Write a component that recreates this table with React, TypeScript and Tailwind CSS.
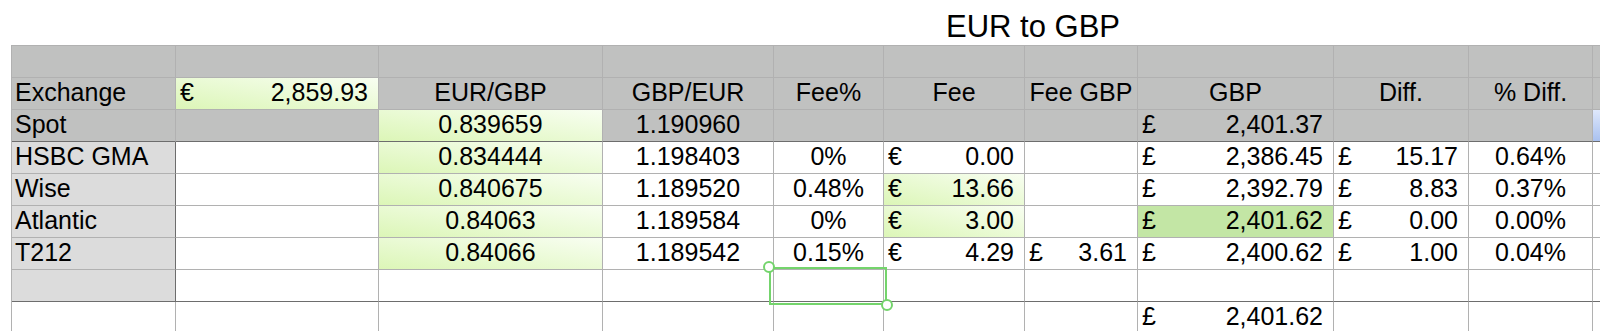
import React from "react";

type Bg = "h" | "l" | "w" | "g" | "G" | "b";
type CellSpec = {
  t?: string;
  sym?: string;
  k?: "l" | "c" | "cur";
  bg: Bg;
};

const bgClass: Record<Bg, string> = {
  h: "bg-[#c0c1c0]",
  l: "bg-[#dcdcdc]",
  w: "bg-white",
  g: "bg-linear-to-bl from-[#f8fef1] to-[#dcf6b7]",
  G: "bg-[#c3e6a5]",
  b: "bg-linear-to-b from-[#dfe8fb] to-[#a9c1ef]",
};

const H = (t?: string, k: "l" | "c" | "cur" = "c"): CellSpec => ({ t, k, bg: "h" });

const header1: CellSpec[] = Array.from({ length: 11 }, () => H());
const header2: CellSpec[] = [
  H("Exchange", "l"),
  { sym: "€", t: "2,859.93", k: "cur", bg: "g" },
  H("EUR/GBP"),
  H("GBP/EUR"),
  H("Fee%"),
  H("Fee"),
  H("Fee GBP"),
  H("GBP"),
  H("Diff."),
  H("% Diff."),
  H(),
];
const spot: CellSpec[] = [
  H("Spot", "l"),
  H(),
  { t: "0.839659", k: "c", bg: "g" },
  H("1.190960"),
  H(),
  H(),
  H(),
  { sym: "£", t: "2,401.37", k: "cur", bg: "h" },
  H(),
  H(),
  { bg: "b" },
];

function body(
  label: string,
  rate: string,
  inv: string,
  feePct: string,
  fee: string,
  feeG: boolean,
  feeGbp: string | undefined,
  gbp: string,
  gbpG: boolean,
  diff: string,
  pdiff: string
): CellSpec[] {
  return [
    { t: label, k: "l", bg: "l" },
    { bg: "w" },
    { t: rate, k: "c", bg: "g" },
    { t: inv, k: "c", bg: "w" },
    { t: feePct, k: "c", bg: "w" },
    { sym: "€", t: fee, k: "cur", bg: feeG ? "g" : "w" },
    feeGbp ? { sym: "£", t: feeGbp, k: "cur", bg: "w" } : { bg: "w" },
    { sym: "£", t: gbp, k: "cur", bg: gbpG ? "G" : "w" },
    { sym: "£", t: diff, k: "cur", bg: "w" },
    { t: pdiff, k: "c", bg: "w" },
    { bg: "w" },
  ];
}

const rows: CellSpec[][] = [
  header1,
  header2,
  spot,
  body("HSBC GMA", "0.834444", "1.198403", "0%", "0.00", false, undefined, "2,386.45", false, "15.17", "0.64%"),
  body("Wise", "0.840675", "1.189520", "0.48%", "13.66", true, undefined, "2,392.79", false, "8.83", "0.37%"),
  body("Atlantic", "0.84063", "1.189584", "0%", "3.00", true, undefined, "2,401.62", true, "0.00", "0.00%"),
  body("T212", "0.84066", "1.189542", "0.15%", "4.29", false, "3.61", "2,400.62", false, "1.00", "0.04%"),
  [{ bg: "l" }, ...Array.from({ length: 10 }, () => ({ bg: "w" as Bg }))],
  [
    { bg: "w" },
    { bg: "w" },
    { bg: "w" },
    { bg: "w" },
    { bg: "w" },
    { bg: "w" },
    { bg: "w" },
    { sym: "£", t: "2,401.62", k: "cur", bg: "w" },
    { bg: "w" },
    { bg: "w" },
    { bg: "w" },
  ],
];

function Cell({ c, r, i }: { c: CellSpec; r: number; i: number }) {
  const darkBottom = r === 2 || r === 7;
  const darkRight = i === 0 && r >= 3 && r <= 7;
  const cls = [
    "h-[32px] border-b border-r overflow-hidden whitespace-nowrap flex items-start pt-[2px] text-[25px] leading-[25px] text-black",
    bgClass[c.bg],
    darkBottom ? "border-b-[#6d6d6d]" : "border-b-[#b1b1b1]",
    darkRight ? "border-r-[#6d6d6d]" : "border-r-[#b1b1b1]",
    c.k === "l" ? "justify-start pl-[3px]" : "",
    c.k === "c" ? "justify-center" : "",
    c.k === "cur" ? "justify-between pl-[4px] pr-[10px]" : "",
  ].join(" ");
  return (
    <div className={cls}>
      {c.k === "cur" ? (
        <>
          <span>{c.sym}</span>
          <span>{c.t}</span>
        </>
      ) : (
        c.t ?? ""
      )}
    </div>
  );
}

export default function App() {
  return (
    <div
      className="relative w-[1600px] h-[331px] overflow-hidden bg-white"
      style={{ fontFamily: '"Liberation Sans", Arial, Helvetica, sans-serif' }}
    >
      <div className="h-[45px] pl-[946px] pt-[11px] text-[31px] leading-[31px] text-black">
        EUR to GBP
      </div>
      <div className="ml-[11px] border-l border-t border-[#b1b1b1] grid grid-cols-[164px_203px_224px_171px_110px_141px_113px_196px_135px_124px_40px] w-max">
        {rows.map((row, r) =>
          row.map((c, i) => <Cell key={`${r}-${i}`} c={c} r={r} i={i} />)
        )}
      </div>

      {/* selection rectangle */}
      <div className="absolute left-[769px] top-[267px] w-[118px] h-[38px] border-2 border-[#74d46c]" />
      <div className="absolute left-[763px] top-[261px] w-[12px] h-[12px] rounded-full border-2 border-[#74d46c] bg-white" />
      <div className="absolute left-[881px] top-[299px] w-[12px] h-[12px] rounded-full border-2 border-[#74d46c] bg-white" />
    </div>
  );
}
